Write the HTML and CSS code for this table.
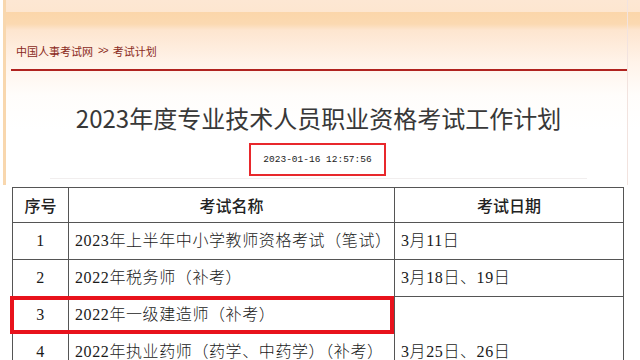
FILE: index.html
```html
<!DOCTYPE html>
<html lang="zh-CN">
<head>
<meta charset="utf-8">
<link rel="stylesheet" href="styles.css">
</head>
<body>
<div class="hero">
  <div class="panel">
    <div class="crumbs"><a>中国人事考试网</a><span class="sep">&gt;&gt;</span><a>考试计划</a></div>
    <div class="redline"></div>
    <h1 class="title">2023年度专业技术人员职业资格考试工作计划</h1>
    <div class="stamp-row"><div class="stamp">2023-01-16 12:57:56</div></div>
    <div class="fade-line"></div>
  </div>
</div>
<div class="table-wrap">
  <table class="plan">
    <colgroup><col class="c1"><col class="c2"><col class="c3"></colgroup>
    <tr class="head"><th>序号</th><th>考试名称</th><th>考试日期</th></tr>
    <tr><td class="num">1</td><td>2023年上半年中小学教师资格考试（笔试）</td><td>3月11日</td></tr>
    <tr><td class="num">2</td><td>2022年税务师（补考）</td><td>3月18日、19日</td></tr>
    <tr><td class="num">3</td><td>2022年一级建造师（补考）</td><td rowspan="2" class="merged">3月25日、26日</td></tr>
    <tr><td class="num">4</td><td>2022年执业药师（药学、中药学）（补考）</td></tr>
  </table>
  <div class="highlight"></div>
</div>
</body>
</html>
```
FILE: styles.css
```css
html, body {
  margin: 0;
  padding: 0;
  background: #fff;
}
body {
  width: 640px;
  height: 360px;
  overflow: hidden;
  font-family: "Noto Sans CJK SC", sans-serif;
}
.hero {
  height: 185px;
  margin-left: 3px;
  border-left: 3px solid #f8d7ae;
  background: linear-gradient(#fde7d3 0, #fde6d0 12px, #fbd6aa 12px, #fbd9b1 24px, #fde5cf 30px, #fff3e9 62px, #fffdfb 95px, #fff 130px);
  display: flex;
}
.panel {
  margin-left: 4px;
  width: 617px;
  border-right: 1px solid #f2e3df;
  display: flex;
  flex-direction: column;
}
.crumbs {
  padding-top: 43px;
  padding-left: 6px;
  height: 26px;
  line-height: 16px;
  font-size: 11px;
  color: #8a2a22;
  display: flex;
  gap: 5px;
}
.crumbs .sep {
  color: #8a2a22;
  font-family: "Liberation Sans", sans-serif;
  font-size: 10px;
  letter-spacing: -1px;
}
.redline {
  height: 2px;
  margin-left: 1px;
  background: #b0231f;
}
.title {
  margin: 31px 0 0;
  height: 32px;
  line-height: 32px;
  font-size: 24px;
  font-weight: 400;
  color: #383838;
  text-align: center;
}
.stamp-row {
  margin-top: 9px;
  display: flex;
  justify-content: center;
  padding-right: 2px;
}
.stamp {
  width: 133px;
  height: 29px;
  border: 2px solid #e8282c;
  font-family: "Liberation Mono", monospace;
  font-size: 9.5px;
  line-height: 30px;
  color: #222;
  text-align: center;
}
.fade-line {
  margin: 2px 40px 0 40px;
  height: 1px;
  background: #f1eeee;
}
.table-wrap {
  position: relative;
  margin-top: 2px;
  margin-left: 12px;
  width: 611px;
}
.plan {
  border-collapse: collapse;
  width: 611px;
  table-layout: fixed;
  color: #1a1a1a;
}
.c1 { width: 56px; }
.c2 { width: 326px; }
.c3 { width: 229px; }
.plan th, .plan td {
  border: 1px solid #555;
  padding: 0 6px;
  white-space: nowrap;
  overflow: hidden;
}
.plan th {
  height: 34px;
  font-size: 16px;
  font-weight: 500;
  font-family: "Noto Sans CJK SC", sans-serif;
  color: #222;
  text-align: center;
}
.plan td {
  height: 36px;
  font-size: 16px;
  font-family: "Liberation Serif", "Noto Sans CJK SC", serif;
  font-weight: 300;
  line-height: 20px;
  letter-spacing: 0.6px;
}
.plan td.num {
  text-align: center;
  padding: 0;
}
.plan td.merged {
  vertical-align: bottom;
  padding-bottom: 8px;
}
.highlight {
  position: absolute;
  left: -2px;
  top: 109px;
  width: 376px;
  height: 30px;
  border: 4px solid #e8121c;
}
```
